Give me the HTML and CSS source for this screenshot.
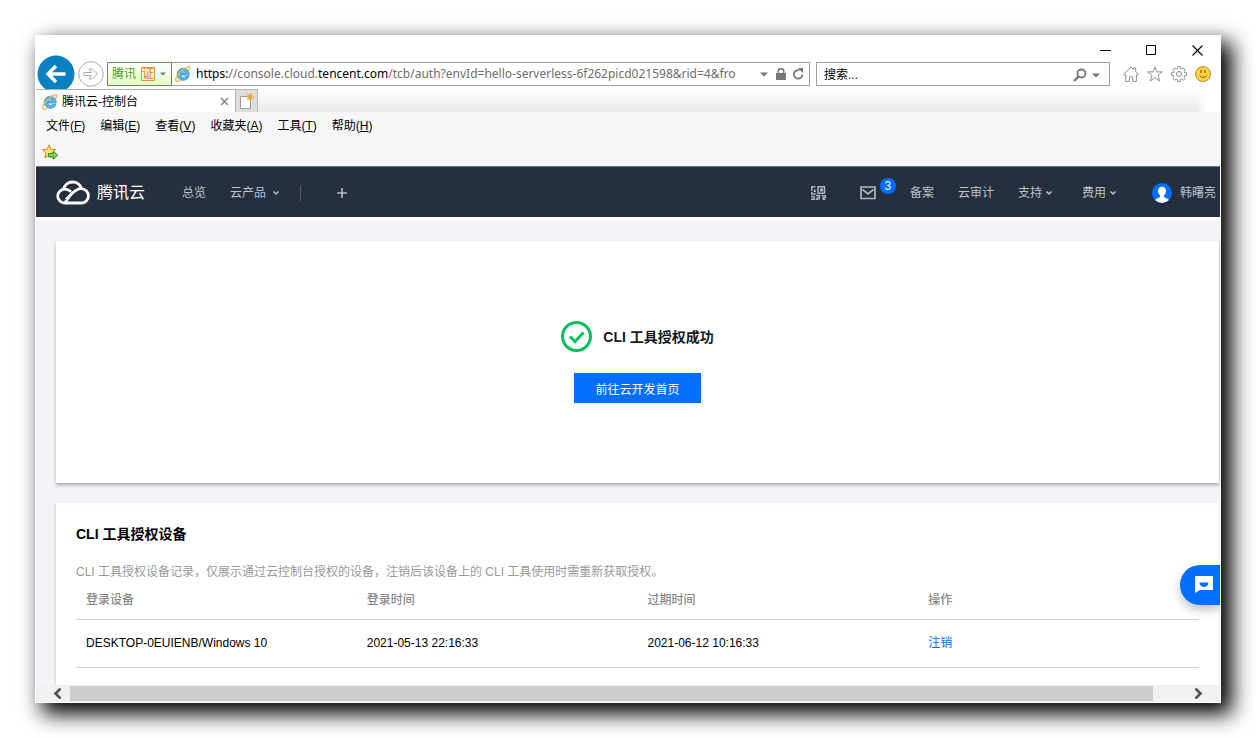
FILE: index.html
```html
<!DOCTYPE html>
<html lang="zh-CN">
<head>
<meta charset="utf-8">
<title>腾讯云-控制台</title>
<link rel="stylesheet" href="styles.css">
</head>
<body>
<svg class="defs" aria-hidden="true">
  <symbol id="ie" viewBox="0 0 16 16">
    <path d="M8.300 2.200a6 6 0 0 0-6.100 6.100 6 6 0 0 0 6.100 6c2.800 0 4.900-1.500 5.700-4h-3.500c-.4.800-1.200 1.200-2.200 1.200-1.500 0-2.500-.9-2.600-2.400h8.500c.3-4-2.200-6.900-5.900-6.900zM5.800 6.800c.3-1.100 1.300-1.800 2.500-1.800s2.200.7 2.500 1.800z" fill="#55b7ea" stroke="#2b83c4" stroke-width=".7"/>
    <path d="M13.500 4.600C15.600 2 15.400.5 13.300.8 11 1.100 7 3.600 4.200 6.900 1.100 10.600-.2 14 1.300 15c.9.700 2.900 0 4.400-1" fill="none" stroke="#eeb63a" stroke-width="1.300"/>
  </symbol>
  <symbol id="chev" viewBox="0 0 8 6"><path d="M1.500 1.500 4 4l2.500-2.500" fill="none" stroke="currentColor" stroke-width="1.500"/></symbol>
  <symbol id="caret" viewBox="0 0 8 5"><path d="M0 .5h8L4 4.500z" fill="currentColor"/></symbol>
</svg>
<div class="window">
  <div class="titlebar">
    <button class="cap" aria-label="最小化"><svg viewBox="0 0 11 11"><path d="M0 5.500h11" stroke="#000"/></svg></button>
    <button class="cap" aria-label="最大化"><svg viewBox="0 0 11 11"><path d="M.5.500h9v9h-9z" fill="none" stroke="#000"/></svg></button>
    <button class="cap" aria-label="关闭"><svg viewBox="0 0 11 11"><path d="m.5.500 10 10m0-10-10 10" stroke="#000" stroke-width="1.100"/></svg></button>
  </div>
  <div class="navrow">
    <button class="back" aria-label="后退"><svg viewBox="0 0 38 38"><circle cx="19" cy="19" r="18.500" fill="#0a80c3"/><path d="M28.500 19H11m8-8-8 8 8 8" fill="none" stroke="#fff" stroke-width="3.400"/></svg></button>
    <button class="forward" aria-label="前进"><svg viewBox="0 0 26 26"><circle cx="13" cy="13" r="12.300" fill="#fff" stroke="#ababab"/><path d="M6 11.500h7.500L11 8h3l5.500 5-5.500 5h-3l2.500-3.500H6z" fill="#fff" stroke="#ababab"/></svg></button>
    <div class="address">
      <button class="cert">腾讯 <span class="seal">证</span><svg class="caret"><use href="#caret"/></svg></button>
      <svg class="ico16"><use href="#ie"/></svg>
      <div class="url" role="textbox" aria-label="地址" tabindex="0"><b>https:</b>//console.cloud.<b>tencent.com</b>/tcb/auth?envId=hello-serverless-6f262picd021598&amp;rid=4&amp;fro</div>
      <svg class="caret"><use href="#caret"/></svg>
      <svg class="lock" viewBox="0 0 10 12"><path d="M2.200 6V3.500a2.800 2.800 0 0 1 5.600 0V6" fill="none" stroke="#777" stroke-width="1.500"/><path d="M0 5h10v7H0z" fill="#777"/></svg>
      <button class="plain" aria-label="刷新"><svg class="refresh" viewBox="0 0 12 12"><path d="M7.500 2.300a4.300 4.300 0 1 0 2.900 4.200" fill="none" stroke="#777" stroke-width="1.800"/><path d="M6 0h5v5.200z" fill="#777"/></svg></button>
    </div>
    <div class="search">
      <input type="text" value="搜索..." aria-label="搜索">
      <svg class="mag" viewBox="0 0 14 14"><circle cx="8.500" cy="5.500" r="4" fill="none" stroke="#777" stroke-width="1.800"/><path d="M5.600 8.400 1 13" stroke="#777" stroke-width="2.400"/></svg>
      <svg class="caret"><use href="#caret"/></svg>
    </div>
    <div class="tools">
      <button class="plain" aria-label="主页"><svg class="ico16" viewBox="0 0 16 16"><path d="M.6 8.300 8 1l2.500 2.400V2h2.200v3.600l2.700 2.700-1 1-1-.8v6.900H9.700v-4.600H6.500v4.600H2.800V8.500l-1.200.8z" fill="#fff" stroke="#8d8d8d"/></svg></button>
      <button class="plain" aria-label="收藏夹"><svg class="ico16" viewBox="0 0 16 16"><path d="m8 .8 1.900 5.100h5.400l-4.300 3.400 1.700 5.700L8 11.700 3.300 15 5 9.300.7 5.900h5.400z" fill="#fff" stroke="#8d8d8d"/></svg></button>
      <button class="plain" aria-label="工具"><svg class="ico16" viewBox="0 0 16 16"><path d="M6.700.6h2.600l.3 2 1.200.5 1.700-1.200 1.700 1.700L13 5.200l.5 1.300 2 .3v2.500l-2 .3-.5 1.300 1.200 1.700-1.700 1.700-1.700-1.200-1.200.5-.3 1.900H6.700l-.3-1.900-1.200-.5-1.700 1.200-1.700-1.700L3 10.900l-.5-1.300-2-.3V6.800l2-.3L3 5.200 1.800 3.600l1.700-1.700 1.700 1.200 1.200-.5z" fill="#fff" stroke="#8d8d8d"/><circle cx="8" cy="8" r="2.500" fill="none" stroke="#8d8d8d"/></svg></button>
      <button class="plain" aria-label="反馈"><svg class="ico16" viewBox="0 0 16 16"><circle cx="8" cy="8" r="7.500" fill="#fbd43e" stroke="#c08a2c"/><path d="M6 4v3M10 4v3" stroke="#a65a14" stroke-width="1.300"/><path d="M4.400 9.600c1.400 2.400 5.800 2.400 7.200 0" fill="none" stroke="#a65a14"/></svg></button>
    </div>
  </div>
  <div class="tabs">
    <div class="tab"><svg class="ico16"><use href="#ie"/></svg><span class="tabname">腾讯云-控制台</span><button class="plain" aria-label="关闭选项卡"><svg class="tabx" viewBox="0 0 9 9"><path d="m1 1 7 7m0-7L1 8" stroke="#8a8a8a" stroke-width="1.700"/></svg></button></div>
    <button class="newtab" aria-label="新建选项卡"><svg class="ico16" viewBox="0 0 16 16"><path d="M1.500 3.500h10v12h-10z" fill="#fff" stroke="#999"/><path d="M11 0v8M7 4h8M8.200 1.200l5.600 5.600m0-5.600L8.200 6.800" stroke="#eea62f" stroke-width="1.200"/></svg></button>
  </div>
  <nav class="menus" aria-label="菜单栏">
    <button>文件(<u>F</u>)</button><button>编辑(<u>E</u>)</button><button>查看(<u>V</u>)</button><button>收藏夹(<u>A</u>)</button><button>工具(<u>T</u>)</button><button>帮助(<u>H</u>)</button>
  </nav>
  <div class="favs"><button class="plain" aria-label="添加到收藏夹栏"><svg class="ico16" viewBox="0 0 16 16"><path d="m7 .8 1.800 4.500 5 .3-3.800 3.200 1 4.900L7 11.200l-4.200 2.700 1.200-5L.3 5.600l4.900-.3z" fill="#ffe36a" stroke="#cf8b1e"/><path d="M6.500 9.500h5V7.200l4.200 4-4.200 4V13h-5z" fill="#7fd14a" stroke="#2f9427"/></svg></button></div>

  <header class="top">
    <a class="brand" href="#"><svg viewBox="0 0 34 26"><path d="M10 19.500 15.500 14c4-4 6.500-5.400 9.700-5.400 4 0 7.200 3.200 7.200 7.200S29.200 23 25.200 23H9c-4 0-7.300-3-7.300-6.900S5 9.200 8.800 9.200c2.600 0 4.300.9 6.200 2.600M7.500 9.200C8.500 5 12 2 16.500 2c4.400 0 8 2.700 9.100 6.600M9 22.500l6.500-8.500" fill="none" stroke="#fff" stroke-width="2.800"/></svg>腾讯云</a>
    <a class="link overview" href="#">总览</a>
    <a class="link products" href="#">云产品<svg class="chev"><use href="#chev"/></svg></a>
    <span class="sep"></span>
    <button class="plain add" aria-label="添加"><svg viewBox="0 0 12 12"><path d="M6 1v10M1 6h10" stroke="#b8bec8" stroke-width="1.600"/></svg></button>
    <div class="right">
      <a class="qr" href="#" aria-label="二维码"><svg viewBox="0 0 15 14"><path d="M7 .8h6.500v6.400H7zM4.500.8H.8v4M.8 6v2h4M3.500 3.500v2H5M9.700 3.300h1.500v1.500H9.700zM0 10.500h3v2.700H0M4.500 13.200h2V11M5 9.600h3.300v4M10.500 9.700h3.800v2h-2v2h2" fill="none" stroke="#b0b6c0" stroke-width="1.500"/></svg></a>
      <a class="mail" href="#" aria-label="消息"><svg viewBox="0 0 16 14"><path d="M1 1h14v11.500H1zM2.500 3.500 8 8l5.500-4.500" fill="none" stroke="#b0b6c0" stroke-width="1.700"/></svg><span class="badge">3</span></a>
      <a class="link record" href="#">备案</a>
      <a class="link audit" href="#">云审计</a>
      <a class="link support" href="#">支持<svg class="chev"><use href="#chev"/></svg></a>
      <a class="link support" href="#">费用<svg class="chev"><use href="#chev"/></svg></a>
      <a class="link user" href="#"><svg viewBox="0 0 20 20"><circle cx="10" cy="10" r="10" fill="#006eff"/><path d="M10 3.800c-2.500 0-4 1.700-4 4.100 0 2 .8 3.500 2 4.300v1.600c0 1.200-4 1.400-5 3.300A10 10 0 0 0 17 17.100c-1-1.900-5-2.100-5-3.300v-1.600c1.200-.8 2-2.300 2-4.300 0-2.400-1.500-4.100-4-4.100z" fill="#fff"/></svg>韩曙亮</a>
    </div>
  </header>

  <main class="page">
    <section class="card result">
      <h1><svg viewBox="0 0 31 31"><circle cx="15.500" cy="15.500" r="14" fill="none" stroke="#0abf5b" stroke-width="3"/><path d="m9 15.500 5 5 8.500-9" fill="none" stroke="#0abf5b" stroke-width="3"/></svg>CLI 工具授权成功</h1>
      <button class="primary">前往云开发首页</button>
    </section>
    <section class="card devices">
      <h2>CLI 工具授权设备</h2>
      <p>CLI 工具授权设备记录，仅展示通过云控制台授权的设备，注销后该设备上的 CLI 工具使用时需重新获取授权。</p>
      <table>
        <thead><tr><th scope="col">登录设备</th><th scope="col">登录时间</th><th scope="col">过期时间</th><th scope="col">操作</th></tr></thead>
        <tbody><tr><td>DESKTOP-0EUIENB/Windows 10</td><td>2021-05-13 22:16:33</td><td>2021-06-12 10:16:33</td><td><a href="#">注销</a></td></tr></tbody>
      </table>
    </section>
    <button class="chat" aria-label="在线咨询"><svg viewBox="0 0 18 18"><path d="M0 0h18v14H5l-5 3z" fill="#fff"/><path d="M4.500 6.500h9a4.500 4.500 0 0 1-9 0z" fill="#006eff"/></svg></button>
  </main>
  <div class="scroll">
    <button class="plain" aria-label="向左滚动"><svg viewBox="0 0 9 11"><path d="M7.500.5 2.500 5.500l5 5" fill="none" stroke="#505050" stroke-width="2.600"/></svg></button>
    <div class="track"><div class="thumb"></div></div>
    <button class="plain" aria-label="向右滚动"><svg viewBox="0 0 9 11"><path d="m1.500.5 5 5-5 5" fill="none" stroke="#505050" stroke-width="2.600"/></svg></button>
  </div>
</div>
</body>
</html>
```
FILE: styles.css
```css
* { box-sizing: border-box; }
body {
  margin: 0;
  min-height: 100vh;
  padding: 35px;
  display: flex;
  background: #fff;
  color: #000;
  font: 12px/20px "Liberation Sans", "Noto Sans CJK SC", sans-serif;
}
button, input { font: inherit; color: inherit; border: 0; padding: 0; background: none; }
a { color: inherit; text-decoration: none; }
svg { display: block; flex: none; }
.defs { position: absolute; width: 0; height: 0; }
.window {
  flex: 1;
  min-width: 0;
  display: flex;
  flex-direction: column;
  padding: 0 1px 1px;
  background: #fff;
  box-shadow: 9px 9px 20px 2px #000;
}
.ico16 { width: 16px; height: 16px; }
.caret { width: 8px; height: 5px; color: #777; }
.plain { display: flex; }

/* browser chrome */
.titlebar { height: 27px; display: flex; justify-content: flex-end; gap: 35px; padding: 10px 17px 0 0; }
.cap { width: 11px; height: 11px; }
.cap svg { width: 11px; height: 11px; }
.navrow { height: 24px; display: flex; align-items: center; padding: 0 9px 0 1px; }
.back { margin: -7px 3px -7px 0; }
.back svg { width: 38px; height: 38px; }
.forward svg { width: 26px; height: 26px; }
.forward { margin-right: 3px; }
.address, .search { display: flex; align-items: center; height: 24px; border: 1px solid #a0a0a0; }
.address { flex: 1 1 703px; min-width: 0; padding-right: 5px; font-family: "Noto Sans", "Noto Sans CJK SC", sans-serif; }
.cert {
  display: flex;
  align-items: center;
  width: 65px;
  height: 24px;
  margin: -1px 3px -1px -1px;
  padding-left: 4px;
  border: 1px solid #6f8d55;
  background: linear-gradient(#fff, #e2ffc4);
  color: #4b9a25;
  white-space: nowrap;
}
.cert .caret { width: 6px; height: 4px; margin-left: 5px; }
.seal { margin-left: 5px; border: 1px solid #e0913c; background: #fff3d2; color: #e07a18; line-height: 12px; }
.url { flex: 1; min-width: 0; margin-left: 5px; overflow: hidden; white-space: nowrap; color: #6d6d6d; }
.url b { font-weight: 400; color: #000; }
.lock { width: 10px; height: 12px; margin: 0 6px 0 8px; }
.refresh { width: 12px; height: 12px; }
.search { flex: 0 1 294px; margin-left: 6px; padding: 2px 9px 0 7px; }
.search input { flex: 1; min-width: 0; }
.mag { width: 14px; height: 14px; margin-right: 5px; }
.tools { display: flex; gap: 8px; margin-left: 13px; }
.tabs { display: flex; height: 23px; margin-top: 3px; background: linear-gradient(90deg, transparent 98%, #fff 99%), linear-gradient(#fff, #e9e9e9); }
.tab { display: flex; align-items: center; width: 200px; padding: 1px 6px 0; background: #fff; border: solid #b0b0b0; border-width: 1px 1px 0 0; }
.tabname { flex: 1; margin-left: 4px; }
.tabx { width: 9px; height: 9px; }
.newtab { display: flex; align-items: center; justify-content: center; width: 22px; background: #dedede; border: solid #b8b8b8; border-width: 1px 1px 0 0; }
.menus { display: flex; gap: 15px; height: 26px; padding: 2px 10px 0; align-items: center; background: #f6f6f6; }
.favs { display: flex; align-items: center; height: 28px; padding-left: 6px; background: #f6f6f6; }

/* console header */
.top { display: flex; align-items: center; height: 51px; padding: 2px 4px 0 20px; border-top: 1px solid #6d747d; background: #262f3e; color: #bcc2cc; white-space: nowrap; }
.brand { display: flex; align-items: center; gap: 7px; color: #fff; font-size: 16px; }
.brand svg { width: 34px; height: 26px; }
.link { display: flex; align-items: center; }
.chev { width: 8px; height: 6px; margin-left: 3px; }
.overview { margin-left: 37px; }
.products { margin-left: 24px; }
.products .chev { margin-left: 6px; }
.sep { width: 1px; height: 16px; margin-left: 20px; background: #545c69; }
.add { margin-left: 35px; }
.add svg { width: 12px; height: 12px; }
.right { display: flex; align-items: center; margin-left: auto; }
.qr svg { width: 15px; height: 14px; }
.mail { position: relative; margin-left: 34px; }
.mail svg { width: 16px; height: 14px; }
.badge { position: absolute; left: 20px; top: -8px; width: 16px; height: 16px; border-radius: 8px; background: #006eff; color: #fff; line-height: 16px; text-align: center; }
.record { margin-left: 34px; }
.audit { margin: 0 24px; }
.support { margin-right: 29px; }
.user { gap: 8px; margin-left: 6px; }
.user svg { width: 20px; height: 20px; }

/* page body */
.page { position: relative; flex: 1; display: flex; flex-direction: column; gap: 20px; padding: 20px 1px 0 20px; border-top: 4px solid #fff; background: #f2f3f7; }
.card { background: #fff; box-shadow: 0 2px 3px rgba(54, 58, 80, .4); }
.result { display: flex; flex-direction: column; align-items: center; gap: 21px; padding: 80px 20px; }
h1, h2 { margin: 0; font-size: 14px; line-height: 22px; }
h1 { display: flex; align-items: center; gap: 11px; color: #16181d; }
h1 svg { width: 31px; height: 31px; }
.primary { height: 30px; padding: 3px 21px 0; background: #006eff; color: #fff; }
.devices { flex: 1; padding: 20px 20px 17px; box-shadow: 0 0 3px rgba(54, 58, 80, .3); clip-path: inset(0 0 0 -3px); }
.devices p { margin: 17px 0 0; color: #999; }
table { width: 100%; table-layout: fixed; border-collapse: collapse; }
th, td { padding: 0 10px; text-align: left; border-bottom: 1px solid #cfd0d2; }
th { height: 37px; color: #888; font-weight: 500; }
td { height: 48px; }
td a { color: #006eff; }
.chat { position: absolute; right: 0; bottom: 80px; width: 40px; height: 40px; padding-left: 15px; border-radius: 20px 0 0 20px; background: #006eff; box-shadow: 0 5px 10px rgba(54, 58, 80, .3); clip-path: inset(-20px 0 -20px -20px); }
.chat svg { width: 18px; height: 18px; }

.scroll { display: flex; align-items: center; justify-content: space-between; height: 17px; padding: 0 17px; background: #f0f0f0; }
.scroll svg { width: 9px; height: 11px; }
.track { flex: 1; height: 15px; margin: 0 41px 0 8px; }
.thumb { height: 15px; background: #cdcdcd; }
```
